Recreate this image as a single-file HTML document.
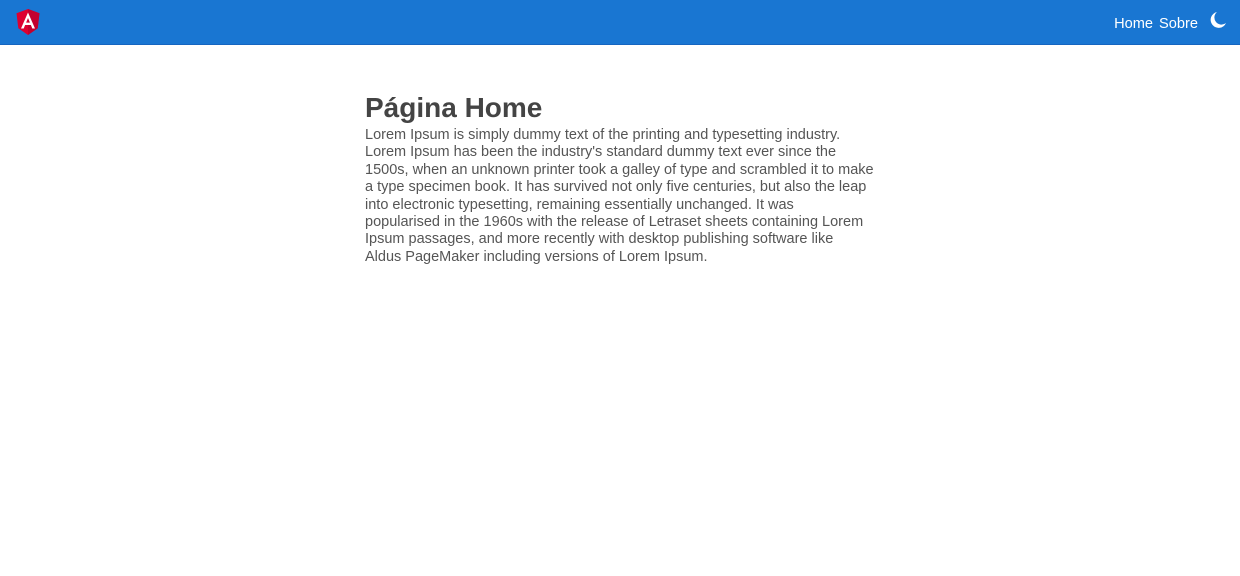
<!DOCTYPE html>
<html><head><meta charset="utf-8"><style>
body{margin:0;background:#fff;font-family:"Liberation Sans",sans-serif;}
.bar{height:44px;background:#1976d2;position:relative;border-bottom:1px solid #1565c0}
.logo{position:absolute;left:16px;top:9px}
.nav{position:absolute;right:12px;top:2px;height:44px;display:flex;align-items:center;color:#fff;font-size:14.6px}
.nav span{margin-right:6px}
h1{position:absolute;left:365px;top:91px;margin:0;font-size:28px;color:#444;font-weight:bold;line-height:34px}
p{position:absolute;left:365px;top:127px;margin:0;font-size:14.5px;line-height:17.4px;color:#555;white-space:nowrap}
</style></head><body>
<div class="bar">
<svg class="logo" width="24" height="26" viewBox="0 0 24 26"><path d="M12 0L0.5 4.2 2.3 19.3 12 26 21.7 19.3 23.5 4.2Z" fill="#dd0031"/><path d="M12 0V26L21.7 19.3 23.5 4.2Z" fill="#c3002f"/><path d="M12 3.5L5 19.5H7.7L9.1 16H14.9L16.3 19.5H19L12 3.5ZM10.1 13.6L12 9 13.9 13.6Z" fill="#fff"/></svg>
<div class="nav"><span>Home</span><span>Sobre</span>
<svg width="20" height="20" viewBox="0 0 20 20" style="margin-left:4px;margin-top:-9px"><path d="M9 2A8 8 0 1 0 18 13 6.5 6.5 0 0 1 9 2Z" fill="#fff"/></svg></div>
</div>
<h1>Página Home</h1>
<p>Lorem Ipsum is simply dummy text of the printing and typesetting industry.<br>Lorem Ipsum has been the industry's standard dummy text ever since the<br>1500s, when an unknown printer took a galley of type and scrambled it to make<br>a type specimen book. It has survived not only five centuries, but also the leap<br>into electronic typesetting, remaining essentially unchanged. It was<br>popularised in the 1960s with the release of Letraset sheets containing Lorem<br>Ipsum passages, and more recently with desktop publishing software like<br>Aldus PageMaker including versions of Lorem Ipsum.</p>
</body></html>
